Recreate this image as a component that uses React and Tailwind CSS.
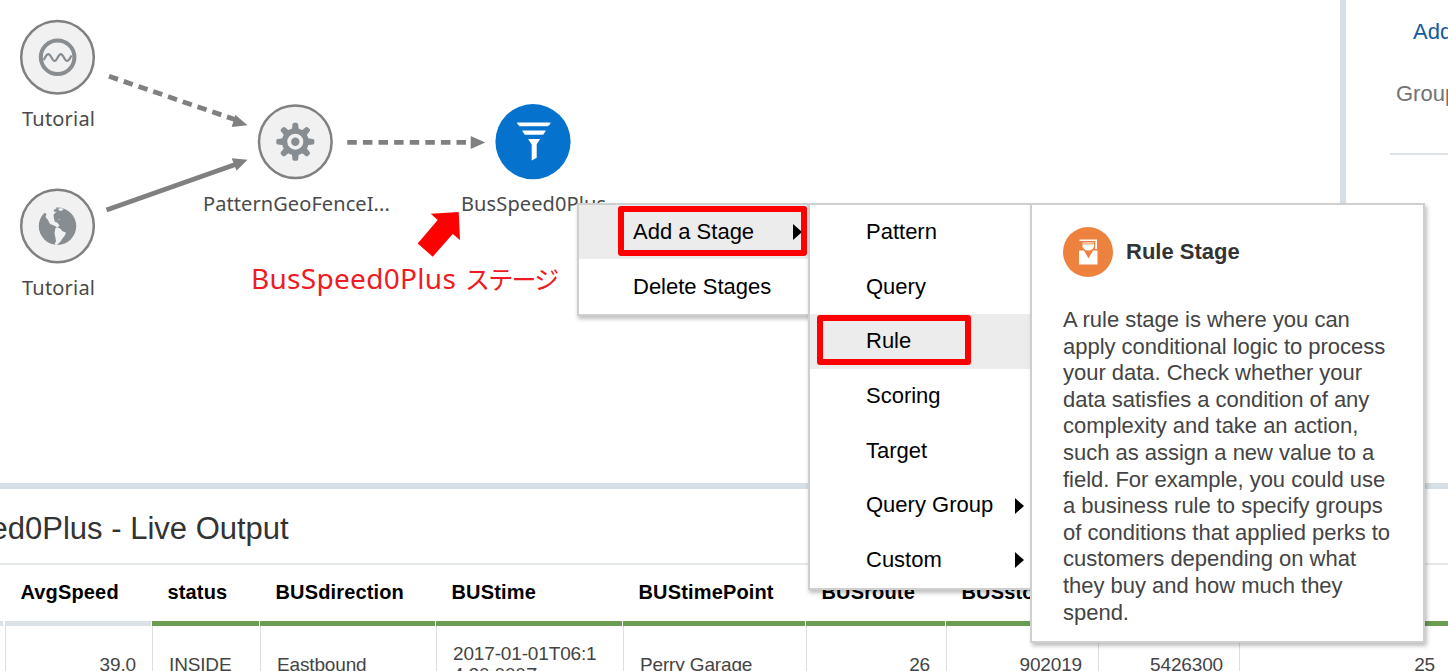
import React from "react";

const columns = [
  { name: "", width: "w-[5px]", bar: "bg-[#dce3e8]", value: "", barW: "w-[3px]" },
  { name: "AvgSpeed", width: "w-[147px]", bar: "bg-[#dce3e8]", value: "39.0", right: true },
  { name: "status", width: "w-[108px]", bar: "bg-[#6a9c52]", value: "INSIDE" },
  { name: "BUSdirection", width: "w-[176px]", bar: "bg-[#6a9c52]", value: "Eastbound" },
  { name: "BUStime", width: "w-[187px]", bar: "bg-[#6a9c52]", value: "2017-01-01T06:1 4:20.000Z" },
  { name: "BUStimePoint", width: "w-[183px]", bar: "bg-[#6a9c52]", value: "Perry Garage" },
  { name: "BUSroute", width: "w-[140px]", bar: "bg-[#6a9c52]", value: "26", right: true },
  { name: "BUSstopId", width: "w-[152px]", bar: "bg-[#6a9c52]", value: "902019", right: true },
  { name: "", width: "w-[141px]", bar: "bg-[#6a9c52]", value: "5426300", right: true },
  { name: "", width: "w-[212px]", bar: "bg-[#6a9c52]", value: "25", right: true },
];

const stages = [
  { name: "Pattern" },
  { name: "Query" },
  { name: "Rule", active: true },
  { name: "Scoring" },
  { name: "Target" },
  { name: "Query Group", more: true },
  { name: "Custom", more: true },
];

const description = [
  "A rule stage is where you can",
  "apply conditional logic to process",
  "your data. Check whether your",
  "data satisfies a condition of any",
  "complexity and take an action,",
  "such as assign a new value to a",
  "field. For example, you could use",
  "a business rule to specify groups",
  "of conditions that applied perks to",
  "customers depending on what",
  "they buy and how much they",
  "spend.",
];

function Caret() {
  return (
    <svg className="mt-[2px] h-4 w-[9px] shrink-0" viewBox="0 0 9 16">
      <path d="M0 0 9 8 0 16Z" fill="#000" />
    </svg>
  );
}

function Diagram() {
  return (
    <svg className="absolute top-0 left-0" width="620" height="320" viewBox="0 0 620 320">
      <g stroke="#808080" strokeWidth="4.8" fill="none">
        <path d="M109 76.3 235 119.6" strokeDasharray="9.5 6.1" />
        <path d="M106.5 210 236 164.3" />
        <path d="M347.3 142.4H472" strokeDasharray="9.5 6.1" />
      </g>
      <g fill="#808080">
        <path d="M235.3 114.8 247.5 125.3 231.7 127Z" />
        <path d="M231.7 158.3 247.5 159.8 236.5 170.8Z" />
        <path d="M470.7 136 485.3 142.4 470.7 149Z" />
      </g>
      <g fill="#f1f1f1" stroke="#808080" strokeWidth="2.5">
        <circle cx="57.5" cy="57.3" r="36.3" />
        <circle cx="57.5" cy="226" r="36.3" />
        <circle cx="295.3" cy="141.7" r="36.3" />
      </g>
      <circle cx="533" cy="141.7" r="37.6" fill="#0572ce" />

      {/* stream */}
      <circle cx="57.6" cy="57.3" r="16.8" fill="none" stroke="#878d91" strokeWidth="4" />
      <path
        d="M43.500 60C45 58.500 46 54.200 48.400 54.200C51 54.200 52 61 54.600 61C57.200 61 58.200 54.200 60.800 54.200C63.400 54.200 64.400 61 67 61C69 61 70 58 71.500 55.500"
        fill="none"
        stroke="#878d91"
        strokeWidth="2.200"
      />

      {/* globe */}
      <circle cx="57.500" cy="226.200" r="18.700" fill="#878d91" />
      <path
        d="M43.800 212.500C47 209 51 207.300 55.800 207L56.600 208.500L53.500 210L54.500 212L56.500 211.500L57.500 213L59.500 211L58 208.800L61.500 208L63.500 209.500L62.500 211.500L64 214.500L62 216L60.500 219L57 220.500L54.500 221.500L57.500 222.800L59.500 225.500L57.500 227.500L54 225.500L50 224L48 220L45.500 217L46.500 214Z"
        fill="#f1f1f1"
      />
      <path d="M53.500 215C55 211.500 60 210 62.500 211C64.500 214 63 217 60.500 218.500C58 219 57.500 221.500 55 222L54 219Z" fill="#878d91" />
      <path d="M62 210L66 211L65 219L60 219.500Z" fill="#878d91" />
      <path d="M55.500 228C57.500 226.800 61 228.500 62 231L65.800 232.500C65.500 236 62.500 237.500 61 241L57 245L54.500 244.500L56 241L54.500 233Z" fill="#f1f1f1" />

      {/* gear */}
      <g transform="translate(295.300 141.700)" fill="#878d91">
        {[0, 45, 90, 135, 180, 225, 270, 315].map((a) => (
          <path key={a} transform={`rotate(${a})`} d="M-3.600 -11 L-2.800 -17.500 Q-2.500 -19 -1.200 -19H1.200Q2.500 -19 2.800 -17.500L3.600 -11Z" />
        ))}
        <circle r="10.700" fill="none" stroke="#878d91" strokeWidth="5.400" />
        <circle r="4.200" />
      </g>

      {/* filter */}
      <g fill="#fff">
        <path d="M517.300 122.400H550.300V124L547.800 126.200H519.800L517.300 124Z" />
        <path d="M522 130.500H546L543.200 134.800H524.800Z" />
        <path d="M528 139H540L536.700 144.500V157.700L531.700 160.500V144.500Z" />
      </g>

      <path
        d="M430.700 213.800 458.700 212 460 240 452.700 234 432.700 256.700 417.700 243.500 437.700 220Z"
        fill="#f00"
      />
    </svg>
  );
}

function Label({ className, children }) {
  return (
    <span className={`absolute whitespace-nowrap font-['Noto_Sans','Open_Sans',sans-serif] text-[20px] leading-[28px] text-[#4a4a4a] ${className}`}>
      {children}
    </span>
  );
}

export default function App() {
  return (
    <div className="relative flex h-[671px] w-[1448px] flex-col overflow-hidden bg-white font-['Liberation_Sans',Arial,sans-serif] whitespace-nowrap text-[#333]">
      <div className="flex h-[483px] shrink-0">
        <main className="relative w-[1340px] shrink-0">
          <Diagram />
          <Label className="top-[105px] left-[22px] tracking-[0.200px]">Tutorial</Label>
          <Label className="top-[274px] left-[22px] tracking-[0.200px]">Tutorial</Label>
          <Label className="top-[190px] left-[203px] tracking-[0.080px]">PatternGeoFenceI...</Label>
          <Label className="top-[190px] left-[461px] tracking-[0.120px]">BusSpeed0Plus</Label>
          <div className="absolute top-[259px] left-[251px] flex items-baseline gap-[9px] leading-[38px] text-[#ed1c24]">
            <span className="font-['Noto_Sans','Open_Sans',sans-serif] text-[28px] tracking-[0.300px]">BusSpeed0Plus</span>
            <span className="font-['Noto_Sans_CJK_JP',sans-serif] text-[25px] tracking-[-1.800px]">ステージ</span>
          </div>
        </main>
        <div className="w-[6px] shrink-0 bg-[#d6dfe6]" />
        <aside className="flex w-[102px] flex-col overflow-hidden text-[22px] leading-[26px]">
          <span className="mt-[19px] pl-[67px] text-[#145c9e]">Add a Stage</span>
          <span className="mt-[36px] pl-[50px] text-[#737373]">Groups</span>
          <div className="mt-[46px] ml-[44px] h-[2px] bg-[#dce3e9]" />
        </aside>
      </div>

      <div className="h-[6px] shrink-0 bg-[#d6dfe6]" />

      <section className="flex flex-1 flex-col">
        <h2 className="flex h-[76px] shrink-0 items-center justify-start border-b-2 border-[#e4e8eb] pt-[7px] text-[31px]">
          <span className="-ml-[118px]">BusSpeed0Plus - Live Output</span>
        </h2>
        <div className="flex h-[137px] shrink-0">
          {columns.map((c, i) => (
            <div key={i} className={`${c.width} flex shrink-0 flex-col`}>
              <div className="flex h-[56px] shrink-0 items-center pb-[2px] pl-[15.500px] text-[20px] font-bold tracking-[0.150px] text-black">{c.name}</div>
              <div className={`h-[5px] shrink-0 ${c.bar} ${c.barW || "mr-[1.500px]"}`} />
              <div
                className={`flex h-[76px] shrink-0 items-center text-[19px] leading-[21px] tracking-[-0.150px] text-[#444] ${i ? "border-l border-[#dedede]" : ""} ${c.right ? "justify-end pr-[16px]" : "pl-[16px]"}`}
              >
                {c.name === "BUStime" ? (
                  <span>
                    2017-01-01T06:1
                    <br />
                    4:20.000Z
                  </span>
                ) : (
                  c.value
                )}
              </div>
            </div>
          ))}
        </div>
      </section>

      <div className="absolute top-[203px] left-[577px] w-[233px] border-2 border-[#cfcfcf] bg-white text-[22px] text-black shadow-[1px_3px_4px_rgba(0,0,0,0.250)]">
        <div className="flex h-[54px] items-center justify-between bg-[#ececec] pr-[6px] pb-[2px] pl-[54px]">
          Add a Stage
          <Caret />
        </div>
        <div className="flex h-[55px] items-center pb-px pl-[54px]">Delete Stages</div>
      </div>

      <div className="absolute top-[203px] left-[808px] w-[224px] border-2 border-[#cfcfcf] bg-white text-[22px] text-black shadow-[1px_3px_4px_rgba(0,0,0,0.250)]">
        {stages.map((s) => (
          <div key={s.name} className={`flex h-[54.700px] items-center justify-between pr-[6px] pb-[2px] pl-[56px] ${s.active ? "bg-[#ececec]" : ""}`}>
            {s.name}
            {s.more && <Caret />}
          </div>
        ))}
      </div>

      <div className="absolute top-[203px] left-[1030px] h-[440px] w-[395px] border-2 border-[#cfcfcf] bg-white pl-[31px] shadow-[2px_3px_4px_rgba(0,0,0,0.250)]">
        <div className="mt-[22px] flex items-center gap-[13px]">
          <svg className="size-[50px]" viewBox="0 0 50 50">
            <circle cx="25" cy="25" r="25" fill="#ed813e" />
            <g fill="#fff">
              <path d="M16.500 12.500H34V14H16.500Z" />
              <path d="M19.500 15.500H31V19C31 21.500 28 23.500 25.300 23.500C22.500 23.500 19.500 21.500 19.500 19Z" />
              <path d="M32.500 13H34V22H32Z" />
              <path d="M16 23.500H21L25.500 31.500L30 23.500H34.500V37.500H16Z" />
            </g>
            <path d="M19.500 16.800H31" stroke="#ed813e" strokeWidth="0.800" />
          </svg>
          <h3 className="pb-[2px] text-[22px] font-bold">Rule Stage</h3>
        </div>
        <p className="mt-[30px] text-[22px] leading-[26.600px] tracking-[-0.020px] text-[#444]">
          {description.map((line) => (
            <span key={line} className="block">
              {line}
            </span>
          ))}
        </p>
      </div>

      <div className="absolute top-[206px] left-[618px] h-[50px] w-[189px] rounded-[3px] border-6 border-[#f00]" />
      <div className="absolute top-[315px] left-[817px] h-[50px] w-[154px] rounded-[3px] border-6 border-[#f00]" />
    </div>
  );
}
